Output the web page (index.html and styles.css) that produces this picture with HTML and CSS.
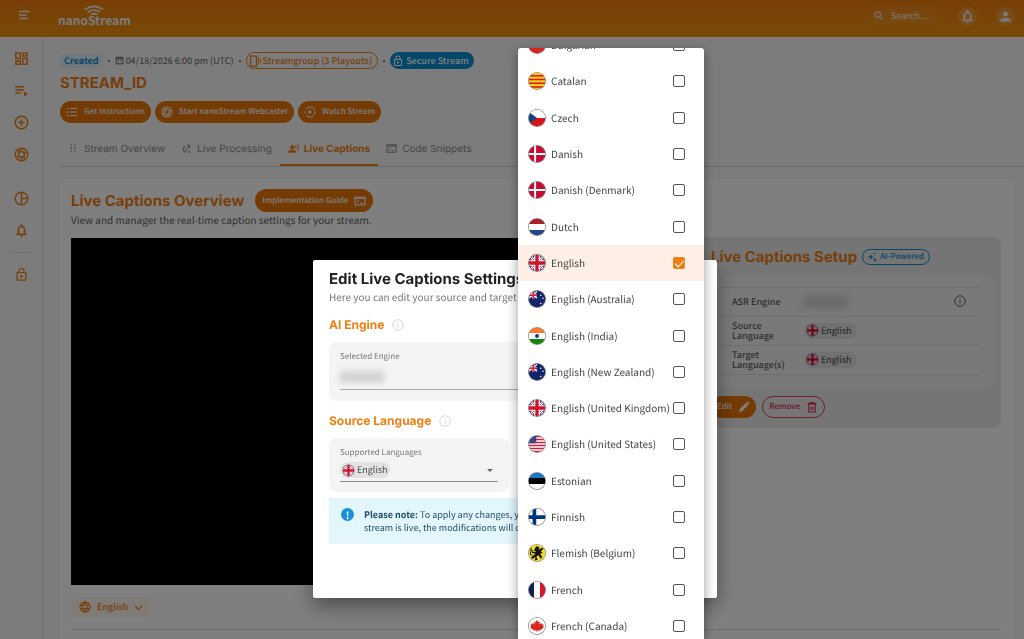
FILE: index.html
```
<!DOCTYPE html>
<html lang="en">
<head>
  <meta charset="UTF-8" />
  <meta name="viewport" content="width=device-width, initial-scale=1" />
  <title>nanoStream - Live Captions</title>
  <link rel="stylesheet" href="styles.css">
</head>
<body>

  <!-- icons and flags -->
  <svg class="sprite" aria-hidden="true">
    <symbol id="i-menu" viewBox="0 0 24 24"><path d="M2 5h21M2 12h15M2 19h18" stroke="currentColor" stroke-width="2.8" fill="none"/></symbol>
    <symbol id="i-search" viewBox="0 0 24 24"><path d="M15.5 14h-.79l-.28-.27C15.41 12.59 16 11.11 16 9.5 16 5.91 13.09 3 9.5 3S3 5.91 3 9.5 5.91 16 9.5 16c1.61 0 3.09-.59 4.23-1.57l.27.28v.79l5 4.99L20.49 19l-4.99-5zm-6 0C7.01 14 5 11.99 5 9.5S7.01 5 9.5 5 14 7.01 14 9.5 11.99 14 9.5 14z" fill="currentColor"/></symbol>
    <symbol id="i-bell" viewBox="0 0 24 24"><path d="M12 22c1.1 0 2-.9 2-2h-4c0 1.1.9 2 2 2zm6-6v-5c0-3.07-1.63-5.64-4.5-6.32V4c0-.83-.67-1.5-1.5-1.5s-1.5.67-1.5 1.5v.68C7.64 5.36 6 7.92 6 11v5l-2 2v1h16v-1l-2-2zm-2 1H8v-6c0-2.48 1.51-4.5 4-4.5s4 2.02 4 4.5v6z" fill="currentColor" stroke="currentColor" stroke-width=".6"/></symbol>
    <symbol id="i-person" viewBox="0 0 24 24"><path d="M12 12c2.21 0 4-1.79 4-4s-1.79-4-4-4-4 1.79-4 4 1.79 4 4 4zm0 2c-2.67 0-8 1.34-8 4v2h16v-2c0-2.66-5.33-4-8-4z" fill="currentColor"/></symbol>
    <symbol id="i-dashboard" viewBox="0 0 24 24"><path d="M3 3h7v9H3zM14 3h7v5h-7zM14 12h7v9h-7zM3 16h7v5H3z" stroke="currentColor" stroke-width="2.4" fill="none"/></symbol>
    <symbol id="i-playlist" viewBox="0 0 24 24"><path d="M2 6h14M2 11h14M2 16h9" stroke="currentColor" stroke-width="2.4" fill="none"/><path d="M16 13v9l6-4.5z" fill="currentColor"/></symbol>
    <symbol id="i-plus" viewBox="0 0 24 24"><path d="M12 7v10M7 12h10" stroke="currentColor" stroke-width="2.4"/><circle cx="12" cy="12" r="10" stroke="currentColor" stroke-width="2.4" fill="none"/></symbol>
    <symbol id="i-camera" viewBox="0 0 24 24"><circle cx="12" cy="12" r="10" stroke="currentColor" stroke-width="2.2" fill="none"/><path d="M9.5 7.7 14 3M14.5 7.7l6.5 1.5M17 12l-1 7.5M14.5 16.3 10 21M9.5 16.3 3 14.8M7 12l1-7.5M9.5 7.7h5L17 12l-2.5 4.3h-5L7 12z" stroke="currentColor" stroke-width="2" fill="none"/></symbol>
    <symbol id="i-pie" viewBox="0 0 24 24"><circle cx="12" cy="12" r="10" stroke="currentColor" stroke-width="2.2" fill="none"/><path d="M12 2v20M12 12h10" stroke="currentColor" stroke-width="2.2"/></symbol>
    <symbol id="i-lock" viewBox="0 0 24 24"><path d="M18 8h-1V6c0-2.76-2.24-5-5-5S7 3.24 7 6v2H6c-1.1 0-2 .9-2 2v10c0 1.1.9 2 2 2h12c1.1 0 2-.9 2-2V10c0-1.1-.9-2-2-2zM9 6c0-1.66 1.34-3 3-3s3 1.34 3 3v2H9V6zm9 14H6V10h12v10zm-6-3c1.1 0 2-.9 2-2s-.9-2-2-2-2 .9-2 2 .9 2 2 2z" fill="currentColor"/></symbol>
    <symbol id="i-calendar" viewBox="0 0 24 24"><path d="M3 4h18v17H3zM3 8h18M8 1v4M16 1v4M8 13h2M14 13h2M8 17h2" stroke="currentColor" stroke-width="2.5" fill="none"/></symbol>
    <symbol id="i-group" viewBox="0 0 24 24"><path d="M3 2h12v20H3z" stroke="currentColor" stroke-width="2.5" fill="none"/><path d="M18.5 5v14M22.5 7v10" stroke="currentColor" stroke-width="2"/></symbol>
    <symbol id="i-list" viewBox="0 0 24 24"><path d="M8 5h14M8 12h14M8 19h14" stroke="currentColor" stroke-width="2"/><path d="M2 5h3M2 12h3M2 19h3" stroke="currentColor" stroke-width="2.5"/></symbol>
    <symbol id="i-play" viewBox="0 0 24 24"><circle cx="12" cy="12" r="10" stroke="currentColor" stroke-width="2" fill="none" stroke-dasharray="24 3.5 5 3.5"/><path d="M9.5 7.5v9l7-4.5z" fill="currentColor"/></symbol>
    <symbol id="i-dots" viewBox="0 0 24 24"><path d="M7 3v20M15 3v20" stroke="currentColor" stroke-width="3" stroke-dasharray="3 4"/></symbol>
    <symbol id="i-process" viewBox="0 0 24 24"><path d="M9 7a7 7 0 0 0 0 13M11 11v10M13 5h6v6M19 5l-6 7M18 15v7" stroke="currentColor" stroke-width="2.2" fill="none"/></symbol>
    <symbol id="i-voice" viewBox="0 0 24 24"><circle cx="9" cy="9" r="4.5" fill="currentColor"/><path d="M0 21v-2c0-3 5-4.5 9-4.5s9 1.5 9 4.5v2z" fill="currentColor"/><path d="M16 6a5 5 0 0 1 0 6M20 3a9 9 0 0 1 0 12" stroke="currentColor" stroke-width="2.2" fill="none"/></symbol>
    <symbol id="i-code" viewBox="0 0 24 24"><path d="M2 4h20v16H2zM2 7h20" stroke="currentColor" stroke-width="2.2" fill="none"/><path d="m6 10 3.5 3L6 16.5M12 16.5h6" stroke="currentColor" stroke-width="2" fill="none"/></symbol>
    <symbol id="i-info" viewBox="0 0 24 24"><circle cx="12" cy="12" r="10.5" stroke="currentColor" stroke-width="2" fill="none"/><path d="M12 10.5v7M12 6.5v2" stroke="currentColor" stroke-width="2"/></symbol>
    <symbol id="i-globe" viewBox="0 0 24 24"><circle cx="12" cy="12" r="10" stroke="currentColor" stroke-width="2.2" fill="none"/><path d="M3 8.5h18M3 15.5h18M12 2c-6 6-6 14 0 20M12 2c6 6 6 14 0 20" stroke="currentColor" stroke-width="2.2" fill="none"/></symbol>
    <symbol id="i-chevron" viewBox="0 0 24 24"><path d="m3 8 9 9 9-9" stroke="currentColor" stroke-width="3" fill="none"/></symbol>
    <symbol id="i-sparkle" viewBox="0 0 24 24"><path d="M9 4l2 6 6 2-6 2-2 6-2-6-6-2 6-2z" fill="currentColor"/><circle cx="18" cy="4" r="2.2" fill="currentColor"/><path d="M19 14l1.5 3.5L24 19l-3.5 1.5L19 24l-1.5-3.5L14 19l3.5-1.5z" fill="currentColor"/></symbol>
    <symbol id="i-pencil" viewBox="0 0 24 24"><path d="M2 22l1.5-6L16 3.5l4.5 4.5L8 20.5z" fill="currentColor"/><path d="m18 1.5 4.5 4.5" stroke="currentColor" stroke-width="3"/></symbol>
    <symbol id="i-trash" viewBox="0 0 24 24"><path d="M5.5 6h13v16h-13zM3 4.5h18M9 2.5h6M10 11v7M14 11v7" stroke="currentColor" stroke-width="2.2" fill="none"/></symbol>

    <clipPath id="disc"><circle cx="12" cy="12" r="11"/></clipPath>
    <symbol id="f-bg" viewBox="0 0 24 24"><g clip-path="url(#disc)"><path fill="#fff" d="M0 0h24v8H0z"/><path fill="#00966e" d="M0 8h24v5H0z"/><path fill="#d8241f" d="M0 13h24v11H0z"/></g></symbol>
    <symbol id="f-ct" viewBox="0 0 24 24"><g clip-path="url(#disc)"><path fill="#fcd116" d="M0 0h24v24H0z"/><path d="M0 5h24M0 10h24M0 15h24M0 20h24" stroke="#da121a" stroke-width="2.2"/></g></symbol>
    <symbol id="f-cz" viewBox="0 0 24 24"><g clip-path="url(#disc)"><path fill="#fff" d="M0 0h24v12H0z"/><path fill="#d7141a" d="M0 12h24v12H0z"/><path fill="#11457e" d="M0 3l12 9-12 9z"/></g></symbol>
    <symbol id="f-dk" viewBox="0 0 24 24"><g clip-path="url(#disc)"><path fill="#c60c30" d="M0 0h24v24H0z"/><path d="M9.5 0v24M0 12h24" stroke="#fff" stroke-width="2.6"/></g></symbol>
    <symbol id="f-nl" viewBox="0 0 24 24"><g clip-path="url(#disc)"><path fill="#ae1c28" d="M0 0h24v8H0z"/><path fill="#fff" d="M0 8h24v8H0z"/><path fill="#21468b" d="M0 16h24v8H0z"/></g></symbol>
    <symbol id="f-gb" viewBox="0 0 24 24"><g clip-path="url(#disc)"><path fill="#24246e" d="M0 0h24v24H0z"/><path d="M2 2l20 20M22 2 2 22" stroke="#fff" stroke-width="4"/><path d="M2 2l20 20M22 2 2 22" stroke="#cf142b" stroke-width="1.2"/><path d="M12 0v24M0 12h24" stroke="#fff" stroke-width="7.5"/><path d="M12 0v24M0 12h24" stroke="#cf142b" stroke-width="4.5"/></g></symbol>
    <symbol id="f-au" viewBox="0 0 24 24"><g clip-path="url(#disc)"><path fill="#12256b" d="M0 0h24v24H0z"/><path d="M1 2l11 9M12 2 1 11" stroke="#fff" stroke-width="1.5"/><path d="M7 0v12M0 7h12" stroke="#fff" stroke-width="3"/><path d="M7 0v12M0 7h12" stroke="#d8192e" stroke-width="2"/><circle cx="17" cy="7" r="1" fill="#fff"/><circle cx="20" cy="11" r="1" fill="#fff"/><circle cx="17" cy="18" r="1" fill="#fff"/></g></symbol>
    <symbol id="f-in" viewBox="0 0 24 24"><g clip-path="url(#disc)"><path fill="#ff7a2b" d="M0 0h24v8H0z"/><path fill="#fff" d="M0 8h24v8H0z"/><path fill="#138808" d="M0 16h24v8H0z"/><circle cx="12" cy="12" r="2.6" fill="#1f2b9a"/></g></symbol>
    <symbol id="f-us" viewBox="0 0 24 24"><g clip-path="url(#disc)"><path fill="#fff" d="M0 0h24v24H0z"/><path d="M0 2h24M0 6h24M0 10h24M0 14h24M0 18h24M0 22h24" stroke="#c8213f" stroke-width="2"/><path fill="#31387a" d="M0 0h11v11H0z"/><path d="M4 4h1M8 4h1M6 7h1M3 9h1M9 9h1" stroke="#fff"/></g></symbol>
    <symbol id="f-ee" viewBox="0 0 24 24"><g clip-path="url(#disc)"><path fill="#1b7ac8" d="M0 0h24v8H0z"/><path fill="#000" d="M0 8h24v8H0z"/><path fill="#fff" d="M0 16h24v8H0z"/></g></symbol>
    <symbol id="f-fi" viewBox="0 0 24 24"><g clip-path="url(#disc)"><path fill="#fff" d="M0 0h24v24H0z"/><path d="M8.5 0v24M0 12h24" stroke="#003580" stroke-width="5"/></g></symbol>
    <symbol id="f-be" viewBox="0 0 24 24"><g clip-path="url(#disc)"><path fill="#f8e01e" d="M0 0h24v24H0z"/><path d="M11 3l4 1v4l3-3 3 1-4 4 3 2-4 1 3 4-2 3-3-5-3 2 2 4-4 1 1-5-4 3-2-2 6-5-5-1 1-2 5 1-3-3z" fill="#111"/><path d="M4 5v4h3M6 15c-4 0-3-3-2-5" stroke="#111" stroke-width="1.4" fill="none"/></g></symbol>
    <symbol id="f-fr" viewBox="0 0 24 24"><g clip-path="url(#disc)"><path fill="#10214f" d="M0 0h8v24H0z"/><path fill="#fff" d="M8 0h8v24H8z"/><path fill="#d9152c" d="M16 0h8v24h-8z"/></g></symbol>
    <symbol id="f-ca" viewBox="0 0 24 24"><g clip-path="url(#disc)"><path fill="#fff" d="M0 0h24v24H0z"/><path d="M12 4l2 3 2-1-1 4 3-2 1 2h2l-1 3 1 1-5 4h-3.5v2h-1v-2H8l-5-4 1-1-1-3h2l1-2 3 2-1-4 2 1z" fill="#d9281e"/></g></symbol>
  </svg>

  <header class="topbar">
    <button class="menu-button" aria-label="Menu"><svg class="icon"><use href="#i-menu"/></svg></button>
    <a class="logo" href="#">
      <svg class="logo-waves" viewBox="0 0 24 11"><path d="M2 5q10-7 20 0M5 8q7-5 14 0M8 11q4-3 8 0" stroke="currentColor" stroke-width="1.8" fill="none"/></svg>
      <span>nanoStream</span>
    </a>
    <div class="topbar-tools">
      <label class="search"><svg class="icon"><use href="#i-search"/></svg><input type="text" placeholder="Search..." aria-label="Search"></label>
      <button class="round" aria-label="Notifications"><svg class="icon"><use href="#i-bell"/></svg></button>
      <button class="round" aria-label="Account"><svg class="icon"><use href="#i-person"/></svg></button>
    </div>
  </header>

  <div class="app">
    <nav class="sidebar">
      <a href="#" aria-label="Dashboard"><svg class="icon"><use href="#i-dashboard"/></svg></a>
      <a href="#" aria-label="Streams"><svg class="icon"><use href="#i-playlist"/></svg></a>
      <a href="#" aria-label="New stream"><svg class="icon"><use href="#i-plus"/></svg></a>
      <a href="#" aria-label="Webcaster"><svg class="icon"><use href="#i-camera"/></svg></a>
      <a class="spaced" href="#" aria-label="Analytics"><svg class="icon"><use href="#i-pie"/></svg></a>
      <a href="#" aria-label="Alerts"><svg class="icon"><use href="#i-bell"/></svg></a>
      <hr>
      <a href="#" aria-label="Security"><svg class="icon"><use href="#i-lock"/></svg></a>
    </nav>

    <main class="content">
      <div class="status-row">
        <span class="created">Created</span>
        <span class="dot"></span>
        <span class="date"><svg class="icon"><use href="#i-calendar"/></svg>04/18/2026 6:00 pm (UTC)</span>
        <span class="dot"></span>
        <span class="pill pill-group"><svg class="icon"><use href="#i-group"/></svg>Streamgroup (3 Playouts)</span>
        <span class="dot"></span>
        <span class="pill pill-secure"><svg class="icon"><use href="#i-lock"/></svg>Secure Stream</span>
      </div>

      <h1>STREAM_ID</h1>

      <div class="actions">
        <button class="btn"><svg class="icon"><use href="#i-list"/></svg>Get Instructions</button>
        <button class="btn"><svg class="icon"><use href="#i-camera"/></svg>Start nanoStream Webcaster</button>
        <button class="btn"><svg class="icon"><use href="#i-play"/></svg>Watch Stream</button>
      </div>

      <div class="tabs">
        <a href="#"><svg class="icon"><use href="#i-dots"/></svg>Stream Overview</a>
        <a href="#"><svg class="icon"><use href="#i-process"/></svg>Live Processing</a>
        <a class="active" href="#"><svg class="icon"><use href="#i-voice"/></svg>Live Captions</a>
        <a href="#"><svg class="icon"><use href="#i-code"/></svg>Code Snippets</a>
      </div>

      <section class="panel">
        <div class="panel-body">
          <div class="panel-main">
            <div class="panel-head">
              <h2>Live Captions Overview</h2>
              <button class="btn btn-guide">Implementation Guide<svg class="icon"><use href="#i-code"/></svg></button>
            </div>
            <p class="lead">View and manager the real-time caption settings for your stream.</p>
            <div class="player"></div>
            <button class="lang-button"><svg class="icon"><use href="#i-globe"/></svg>English<svg class="icon chevron"><use href="#i-chevron"/></svg></button>
          </div>

          <aside class="setup">
            <div class="setup-head">
              <h2>Live Captions Setup</h2>
              <span class="ai-badge"><svg class="icon"><use href="#i-sparkle"/></svg>AI-Powered</span>
            </div>
            <div class="setup-card">
              <table>
                <tr><th>ASR Engine</th><td><span class="redacted"></span></td><td class="end"><svg class="icon"><use href="#i-info"/></svg></td></tr>
                <tr><th>Source Language</th><td colspan="2"><span class="chip"><svg class="flag"><use href="#f-gb"/></svg>English</span></td></tr>
                <tr><th>Target Language(s)</th><td colspan="2"><span class="chip"><svg class="flag"><use href="#f-gb"/></svg>English</span></td></tr>
              </table>
            </div>
            <div class="setup-actions">
              <button class="btn">Edit<svg class="icon"><use href="#i-pencil"/></svg></button>
              <button class="btn btn-remove">Remove<svg class="icon"><use href="#i-trash"/></svg></button>
            </div>
          </aside>
        </div>
        <hr>
      </section>
    </main>
  </div>

  <div class="backdrop"></div>

  <div class="dialog" role="dialog" aria-labelledby="dialogTitle">
    <h2 id="dialogTitle">Edit Live Captions Settings</h2>
    <p class="dialog-lead">Here you can edit your source and target languages.</p>

    <h3>AI Engine <svg class="icon"><use href="#i-info"/></svg></h3>
    <div class="field">
      <span class="field-label">Selected Engine</span>
      <div class="field-value"><span class="redacted"></span></div>
    </div>

    <h3>Source Language <svg class="icon"><use href="#i-info"/></svg></h3>
    <div class="field field-half">
      <label class="field-label" for="source">Supported Languages</label>
      <div class="select">
        <span class="select-chip"><svg class="flag"><use href="#f-gb"/></svg></span>
        <select id="source"><option>English</option></select>
      </div>
    </div>

    <div class="note">
      <span class="note-icon">!</span>
      <p><strong>Please note:</strong> To apply any changes, you<br>stream is live, the modifications will only</p>
    </div>
  </div>

  <div class="dropdown">
    <ul class="options">
      <li><label><svg class="flag"><use href="#f-bg"/></svg><span>Bulgarian</span><input type="checkbox"></label></li>
      <li><label><svg class="flag"><use href="#f-ct"/></svg><span>Catalan</span><input type="checkbox"></label></li>
      <li><label><svg class="flag"><use href="#f-cz"/></svg><span>Czech</span><input type="checkbox"></label></li>
      <li><label><svg class="flag"><use href="#f-dk"/></svg><span>Danish</span><input type="checkbox"></label></li>
      <li><label><svg class="flag"><use href="#f-dk"/></svg><span>Danish (Denmark)</span><input type="checkbox"></label></li>
      <li><label><svg class="flag"><use href="#f-nl"/></svg><span>Dutch</span><input type="checkbox"></label></li>
      <li class="selected"><label><svg class="flag"><use href="#f-gb"/></svg><span>English</span><input type="checkbox" checked></label></li>
      <li><label><svg class="flag"><use href="#f-au"/></svg><span>English (Australia)</span><input type="checkbox"></label></li>
      <li><label><svg class="flag"><use href="#f-in"/></svg><span>English (India)</span><input type="checkbox"></label></li>
      <li><label><svg class="flag"><use href="#f-au"/></svg><span>English (New Zealand)</span><input type="checkbox"></label></li>
      <li><label><svg class="flag"><use href="#f-gb"/></svg><span>English (United Kingdom)</span><input type="checkbox"></label></li>
      <li><label><svg class="flag"><use href="#f-us"/></svg><span>English (United States)</span><input type="checkbox"></label></li>
      <li><label><svg class="flag"><use href="#f-ee"/></svg><span>Estonian</span><input type="checkbox"></label></li>
      <li><label><svg class="flag"><use href="#f-fi"/></svg><span>Finnish</span><input type="checkbox"></label></li>
      <li><label><svg class="flag"><use href="#f-be"/></svg><span>Flemish (Belgium)</span><input type="checkbox"></label></li>
      <li><label><svg class="flag"><use href="#f-fr"/></svg><span>French</span><input type="checkbox"></label></li>
      <li><label><svg class="flag"><use href="#f-ca"/></svg><span>French (Canada)</span><input type="checkbox"></label></li>
    </ul>
  </div>

</body>
</html>
```
FILE: styles.css
```
:root {
  --orange: #ee7f14;
  --orange-dark: #e8760a;
  --blue: #0a8fd0;
  --text: #606060;
  --body-font: "Noto Sans CJK SC", "Open Sans", sans-serif;
  --title-font: Inter, "Open Sans", sans-serif;
}

* {
  box-sizing: border-box;
}

body {
  margin: 0;
  height: 100vh;
  overflow: hidden;
  display: flex;
  flex-direction: column;
  background: #f9f9f9;
  color: var(--text);
  font-family: var(--body-font);
  font-size: 10px;
  line-height: 14px;
  text-rendering: geometricPrecision;
}

h1, h2, h3, p, ul {
  margin: 0;
}

a {
  color: inherit;
  text-decoration: none;
}

button, input, select {
  font: inherit;
  color: inherit;
  border: 0;
  padding: 0;
  background: none;
  text-rendering: inherit;
}

.sprite {
  position: absolute;
  width: 0;
  height: 0;
}

.icon {
  width: 12px;
  height: 12px;
  flex: none;
}

/* the grey shows as a thin ring round the flag */
.flag {
  width: 18px;
  height: 18px;
  flex: none;
  border-radius: 50%;
  background: #8f8f8f;
}

/* top bar */
.topbar {
  flex: none;
  height: 37px;
  display: flex;
  align-items: flex-start;
  padding: 0 9px 0 17px;
  color: #f4f4f4;
  background: linear-gradient(#f07c0c, #f0960c);
}

.menu-button {
  margin-top: 9px;
  height: 14px;
}

.menu-button .icon {
  width: 14px;
}

.logo {
  display: flex;
  flex-direction: column;
  align-items: center;
  margin: 5px 0 0 27px;
  font-size: 12px;
  font-weight: 700;
}

.logo-waves {
  width: 24px;
  height: 10px;
}

.logo span {
  line-height: 12px;
}

.topbar-tools {
  margin-left: auto;
  margin-top: 6px;
  display: flex;
  align-items: center;
  gap: 19px;
}

.search {
  display: flex;
  align-items: center;
  gap: 6px;
  width: 70px;
  height: 20px;
  padding: 0 4px;
  border-radius: 10px;
  background: rgba(255, 255, 255, 0.06);
}

.search input {
  width: 44px;
  font-size: 9px;
  outline: 0;
}

.search input::placeholder {
  color: #f4f4f4;
}

.round {
  width: 19px;
  height: 19px;
  display: flex;
  align-items: center;
  justify-content: center;
  border-radius: 50%;
  background: rgba(255, 255, 255, 0.16);
}

.round .icon {
  width: 15px;
  height: 15px;
}

/* layout */
.app {
  flex: 1;
  display: flex;
  min-height: 0;
}

.sidebar {
  flex: none;
  width: 43px;
  display: flex;
  flex-direction: column;
  align-items: center;
  gap: 17px;
  padding-top: 14px;
  border-right: 1px solid #dedede;
  color: var(--orange);
}

.sidebar a {
  height: 15px;
}

.sidebar .icon {
  width: 15px;
  height: 15px;
}

.sidebar .spaced {
  margin-top: 12px;
}

.sidebar hr {
  width: 20px;
  margin: -3px 0;
  border: 0;
  border-top: 1px solid #d8d8d8;
}

.content {
  flex: 1;
  display: flex;
  flex-direction: column;
  padding: 15px 11px 0 17px;
}

.status-row {
  display: flex;
  align-items: center;
  gap: 5px;
  height: 17px;
  font-size: 9px;
}

.created {
  padding: 0 4px;
  border-radius: 4px;
  background: #e3f2fb;
  color: var(--blue);
  font-weight: 700;
}

.dot {
  width: 2px;
  height: 2px;
  border-radius: 50%;
  background: #555;
}

.date {
  display: flex;
  align-items: center;
  gap: 2px;
}

.date .icon {
  width: 9px;
  height: 9px;
}

.pill {
  display: flex;
  align-items: center;
  gap: 2px;
  height: 17px;
  padding: 0 5px 0 2px;
  border-radius: 9px;
  font-weight: 500;
}

.pill-group {
  border: 1px solid var(--orange);
  color: var(--orange);
}

.pill-secure {
  background: var(--blue);
  color: #fff;
}

h1, h2, h3 {
  font-family: var(--title-font);
  font-weight: 700;
  color: var(--orange);
}

h1 {
  margin-top: 4px;
  font-size: 15px;
  line-height: 20px;
}

.actions {
  display: flex;
  gap: 4px;
  margin-top: 8px;
}

.btn {
  display: flex;
  align-items: center;
  gap: 6px;
  height: 22px;
  padding: 0 6px;
  border-radius: 11px;
  background: var(--orange-dark);
  color: #fff;
  font-size: 8px;
  font-weight: 500;
}

.tabs {
  display: flex;
  margin: 10px -11px 0 0;
  border-bottom: 1px solid #d4d4d4;
  font-family: var(--title-font);
  font-size: 10px;
  color: #8a8a8a;
}

.tabs a {
  display: flex;
  align-items: center;
  gap: 5px;
  height: 33px;
  padding: 0 8px;
  border-bottom: 2px solid transparent;
}

.tabs .icon {
  width: 11px;
  height: 11px;
}

.tabs .active {
  color: var(--orange);
  border-color: var(--orange);
  font-weight: 700;
}

/* captions panel */
.panel {
  flex: 1;
  margin-top: 12px;
  padding: 10px 12px 0 11px;
  background: #fff;
}

.panel-body {
  display: flex;
  gap: 10px;
}

.panel hr {
  margin: 12px 0 0;
  border: 0;
  border-top: 1px solid #dedede;
}

.panel-main {
  flex: 1;
}

.panel-head {
  display: flex;
  align-items: center;
  gap: 11px;
}

.panel h2 {
  font-size: 15px;
  line-height: 20px;
}

.btn-guide {
  height: 23px;
  padding: 0 7px;
  border-radius: 12px;
}

.lead {
  font-size: 10px;
  line-height: 16px;
}

.player {
  height: 347px;
  margin-top: 10px;
  background: #000;
}

.lang-button {
  display: flex;
  align-items: center;
  gap: 6px;
  height: 20px;
  margin-top: 12px;
  padding: 0 8px;
  border-radius: 4px;
  background: #fff6ec;
  color: var(--orange);
  font-size: 9px;
  font-weight: 500;
}

.lang-button .chevron {
  width: 9px;
  height: 9px;
}

.setup {
  flex: none;
  width: 302px;
  height: 191px;
  margin-top: 48px;
  padding: 10px 8px 10px 12px;
  border-radius: 8px;
  background: #ebebeb;
}

.setup-head {
  display: flex;
  align-items: center;
  gap: 5px;
}

.ai-badge {
  display: flex;
  align-items: center;
  gap: 3px;
  height: 16px;
  padding: 0 5px 0 4px;
  border: 1px solid var(--blue);
  border-radius: 8px;
  color: var(--blue);
  font-size: 8px;
  font-weight: 500;
}

.ai-badge .icon {
  width: 10px;
  height: 10px;
}

.setup-card {
  height: 112px;
  margin-top: 9px;
  padding: 11px 13px 0 9px;
  border-radius: 4px;
  background: #f2f2f2;
}

.setup table {
  width: 100%;
  border-collapse: collapse;
  border-top: 1px solid #dadada;
  font-size: 9px;
  line-height: 10px;
}

.setup tr {
  height: 29px;
  border-bottom: 1px solid #dadada;
}

.setup th {
  width: 84px;
  padding: 0 12px;
  text-align: left;
  font-weight: 500;
}

.setup td {
  padding: 0;
}

.setup .end {
  width: 26px;
}

.redacted {
  display: block;
  width: 44px;
  height: 12px;
  background: #d2d2d2;
  filter: blur(3px);
}

.chip {
  display: inline-flex;
  align-items: center;
  gap: 2px;
  height: 16px;
  padding: 0 5px 0 2px;
  border-radius: 8px;
  background: #e2e2e2;
  color: #444;
}

.chip .flag, .select-chip .flag {
  width: 13px;
  height: 13px;
  background: none;
}

.setup-actions {
  display: flex;
  gap: 6px;
  margin-top: 8px;
}

.btn-remove {
  border: 1px solid #e0405e;
  background: none;
  color: #d6284a;
}

/* dialog */
.backdrop {
  position: fixed;
  inset: 0;
  background: rgba(0, 0, 0, 0.5);
}

.dialog {
  position: fixed;
  top: 260px;
  left: 313px;
  width: 404px;
  min-height: 338px;
  padding: 9px 16px;
  border-radius: 2px;
  background: #fff;
  box-shadow: 0 8px 20px rgba(0, 0, 0, 0.4);
}

.dialog h2 {
  font-size: 15px;
  line-height: 20px;
  color: #222;
}

.dialog-lead {
  line-height: 16px;
  font-size: 10px;
  color: #777;
}

.dialog h3 {
  display: flex;
  align-items: center;
  gap: 8px;
  margin: 10px 0 7px;
  font-size: 12px;
  line-height: 20px;
}

.dialog h3 .icon {
  color: #d5d8dc;
}

.field {
  height: 59px;
  padding: 9px 11px;
  border-radius: 8px;
  background: #f4f4f4;
}

.field-half {
  width: 180px;
  height: 54px;
}

.field-label {
  display: block;
  font-size: 8px;
  line-height: 12px;
  color: #777;
}

.field-value {
  height: 27px;
  padding-top: 8px;
  border-bottom: 1px solid #aaa;
}

.select {
  position: relative;
  height: 23px;
  border-bottom: 1px solid #8a8a8a;
  color: #4a4a4a;
}

.select::after {
  content: "";
  position: absolute;
  top: 10px;
  right: 5px;
  border: 3px solid transparent;
  border-top-color: #666;
}

.select-chip {
  position: absolute;
  top: 3px;
  left: 0;
  width: 50px;
  height: 16px;
  padding: 2px;
  line-height: 0;
  border-radius: 8px;
  background: #e2e2e2;
}

.select select {
  position: relative;
  width: 100%;
  height: 22px;
  padding-left: 17px;
  appearance: none;
  font-size: 9px;
}

.note {
  display: flex;
  gap: 10px;
  margin-top: 6px;
  height: 46px;
  padding: 10px 12px;
  background: #e3f5fd;
  color: #1f4d63;
}

.note-icon {
  flex: none;
  width: 13px;
  height: 13px;
  border-radius: 50%;
  background: #1791d8;
  color: #fff;
  font-weight: 700;
  line-height: 13px;
  text-align: center;
}

.note p {
  font-size: 9px;
  line-height: 13px;
  white-space: nowrap;
}

/* language list */
.dropdown {
  position: fixed;
  top: 48px;
  bottom: 0;
  left: 518px;
  width: 186px;
  overflow: hidden;
  border-radius: 3px 3px 0 0;
  background: #fff;
  box-shadow: 0 3px 12px rgba(0, 0, 0, 0.4);
  color: #444;
}

.options {
  display: flex;
  flex-direction: column;
  height: calc(100% + 26px);
  margin-top: -21px;
  padding: 0;
  list-style: none;
}

.options li {
  flex: 1;
}

.options .selected {
  background: #fdefe5;
}

.options label {
  display: flex;
  align-items: center;
  gap: 5px;
  height: 100%;
  padding: 0 19px 0 10px;
}

.options span {
  flex: 1;
  min-width: 0;
  white-space: nowrap;
}

.options input {
  appearance: none;
  flex: none;
  width: 12px;
  height: 12px;
  margin: 0;
  border: 1px solid #555;
  border-radius: 2px;
}

.options input:checked {
  border-color: var(--orange);
  background: var(--orange);
}

.options input:checked::after {
  content: "";
  display: block;
  width: 4px;
  height: 8px;
  margin-left: 3px;
  border: solid #fff;
  border-width: 0 1px 1px 0;
  transform: rotate(45deg);
}
```
